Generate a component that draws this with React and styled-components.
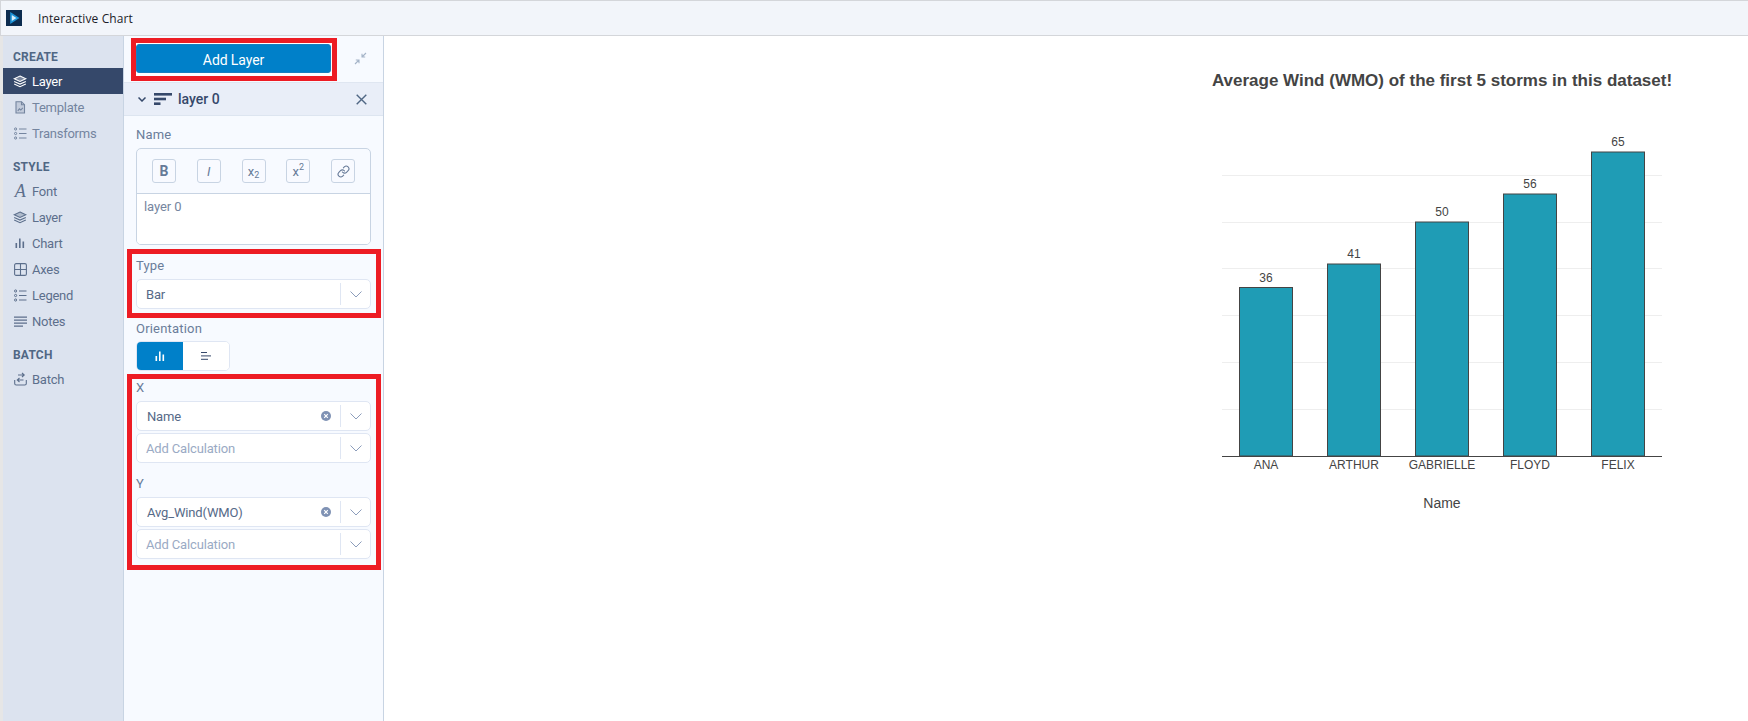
import React from "react";
import styled, { createGlobalStyle } from "styled-components";
import { Link } from "lucide-react";

const GlobalStyle = createGlobalStyle`
  html, body {
    margin: 0;
    padding: 0;
    height: 100%;
    overflow: hidden;
    background: #ffffff;
    font-family: Roboto, "Liberation Sans", sans-serif;
  }
  #root {
    height: 100%;
  }
  * {
    box-sizing: border-box;
  }
`;

const Layers = () => (
  <svg width="14" height="13" viewBox="0 0 14 13" fill="none" stroke="currentColor" strokeWidth="1.1">
    <path d="M7 1 12.8 3.7 7 6.4 1.2 3.7Z" fill="currentColor" fillOpacity="0.35" />
    <path d="M1.2 6.4 7 9.1 12.8 6.4" />
    <path d="M1.2 9 7 11.7 12.8 9" />
  </svg>
);

const TemplateIcon = () => (
  <svg width="12" height="13" viewBox="0 0 12 13" fill="none" stroke="currentColor" strokeWidth="1.1">
    <path d="M2 .7H7.5L10.5 3.7V12H2Z" fill="currentColor" fillOpacity="0.25" />
    <path d="M3.8 9.8 5.4 7.8 6.8 9 8.8 6.8" />
    <path d="M7.5 .7V3.7H10.5" />
  </svg>
);

const ListIcon = () => (
  <svg width="13" height="13" viewBox="0 0 13 13" fill="none" stroke="currentColor">
    <circle cx="1.6" cy="2" r="1.1" strokeWidth="1" />
    <circle cx="1.6" cy="6.5" r="1.1" strokeWidth="1" />
    <circle cx="1.6" cy="11" r="1.1" strokeWidth="1" />
    <path d="M5 2H12.5M5 6.5H12.5M5 11H12.5" strokeWidth="1.1" />
  </svg>
);

const BarsIcon = ({ size = 10 }) => (
  <svg width={size} height={size} viewBox="0 0 10 10" fill="currentColor">
    <rect x="0.5" y="5" width="1.6" height="5" />
    <rect x="4" y="0.5" width="1.6" height="9.5" />
    <rect x="7.5" y="3.5" width="1.6" height="6.5" />
  </svg>
);

const AxesIcon = () => (
  <svg width="13" height="13" viewBox="0 0 13 13" fill="none" stroke="currentColor" strokeWidth="1.1">
    <rect x=".6" y=".6" width="11.8" height="11.8" rx="1.5" />
    <path d="M6.5 .6V12.4M.6 6.5H12.4" />
  </svg>
);

const NotesIcon = () => (
  <svg width="13" height="11" viewBox="0 0 13 11" fill="none" stroke="currentColor" strokeWidth="1.2">
    <path d="M0 1.2H13M0 4.2H13M0 7.2H13M0 10.2H9" />
  </svg>
);

const BatchIcon = () => (
  <svg width="13" height="14" viewBox="0 0 13 14" fill="none" stroke="currentColor" strokeWidth="1.1">
    <path d="M4 3H10M8 1 10.2 3 8 5" />
    <path d="M9.5 8H3.5M5.5 6 3.3 8 5.5 10" />
    <path d="M.7 8V11.5Q.7 13 2.2 13H10.8Q12.3 13 12.3 11.5V8" />
  </svg>
);

const Chevron = ({ w = 12, h = 6, sw = 1 }) => (
  <svg width={w} height={h + 1} viewBox={`0 0 ${w} ${h + 1}`} fill="none" stroke="currentColor" strokeWidth={sw}>
    <path d={`M.5 .5 ${w / 2} ${h} ${w - 0.5} .5`} />
  </svg>
);

const App = () => {
  return (
    <>
      <GlobalStyle />
      <Page>
        <TitleBar>
          <Logo>
            <svg width="16" height="16" viewBox="0 0 16 16">
              <rect width="16" height="16" fill="#0c2c4f" />
              <path d="M5 3.5 12 8 5 12.5Z" fill="#d8ecf8" stroke="#1c93d6" strokeWidth="1.6" />
            </svg>
          </Logo>
          <WindowTitle>Interactive Chart</WindowTitle>
        </TitleBar>
        <Workspace>
          <Sidebar>
            <NavSection>
              <SectionTitle>CREATE</SectionTitle>
              <NavItem $active><NavIcon><Layers /></NavIcon>Layer</NavItem>
              <NavItem $muted><NavIcon><TemplateIcon /></NavIcon>Template</NavItem>
              <NavItem $muted><NavIcon><ListIcon /></NavIcon>Transforms</NavItem>
            </NavSection>
            <NavSection>
              <SectionTitle>STYLE</SectionTitle>
              <NavItem><NavIcon><FontGlyph>A</FontGlyph></NavIcon>Font</NavItem>
              <NavItem><NavIcon><Layers /></NavIcon>Layer</NavItem>
              <NavItem><NavIcon><BarsIcon /></NavIcon>Chart</NavItem>
              <NavItem><NavIcon><AxesIcon /></NavIcon>Axes</NavItem>
              <NavItem><NavIcon><ListIcon /></NavIcon>Legend</NavItem>
              <NavItem><NavIcon><NotesIcon /></NavIcon>Notes</NavItem>
            </NavSection>
            <NavSection>
              <SectionTitle>BATCH</SectionTitle>
              <NavItem><NavIcon><BatchIcon /></NavIcon>Batch</NavItem>
            </NavSection>
          </Sidebar>

          <Panel>
            <PanelTop>
              <AddHighlight>
                <AddButton>Add Layer</AddButton>
              </AddHighlight>
              <CollapseIcon>
                <svg width="13" height="13" viewBox="0 0 13 13" fill="none" stroke="currentColor" strokeWidth="1.1">
                  <path d="M12 1 8 5M8 1.8V5H11.2" />
                  <path d="M1 12 5 8M1.8 8H5V11.2" />
                </svg>
              </CollapseIcon>
            </PanelTop>

            <LayerHeader>
              <Chevron w={8} h={4} sw={1.5} />
              <LayerGlyph>
                <svg width="18" height="12" viewBox="0 0 18 12" fill="currentColor">
                  <rect width="18" height="2.6" />
                  <rect y="4.7" width="12" height="2.6" />
                  <rect y="9.4" width="6.5" height="2.6" />
                </svg>
              </LayerGlyph>
              <LayerName>layer 0</LayerName>
              <CloseIcon>
                <svg width="11" height="11" viewBox="0 0 11 11" fill="none" stroke="currentColor" strokeWidth="1.4">
                  <path d="M.7 .7 10.3 10.3M10.3 .7 .7 10.3" />
                </svg>
              </CloseIcon>
            </LayerHeader>

            <PanelBody>
              <Label>Name</Label>
              <Editor>
                <Toolbar>
                  <ToolButton $bold>B</ToolButton>
                  <ToolButton $italic>I</ToolButton>
                  <ToolButton>x<Sub>2</Sub></ToolButton>
                  <ToolButton>x<Sup>2</Sup></ToolButton>
                  <ToolButton><Link size={13} strokeWidth={2} /></ToolButton>
                </Toolbar>
                <EditorText>layer 0</EditorText>
              </Editor>

              <Highlight $top={3} $bottom={4} $gap={4}>
                <Label>Type</Label>
                <Select value="Bar" />
              </Highlight>

              <Label $top={2} $bottom={5}>Orientation</Label>
              <Toggle>
                <ToggleOption $on><BarsIcon /></ToggleOption>
                <ToggleOption>
                  <svg width="10" height="10" viewBox="0 0 10 10" fill="currentColor">
                    <rect x="0" y="1" width="6" height="1" />
                    <rect x="0" y="4.4" width="10" height="1" />
                    <rect x="0" y="7.8" width="7" height="1" />
                  </svg>
                </ToggleOption>
              </Toggle>

              <Highlight $top={0} $bottom={6} $gap={3}>
                <Label>X</Label>
                <Select value="Name" clearable />
                <Select placeholder="Add Calculation" stacked />
                <Label $top={12}>Y</Label>
                <Select value="Avg_Wind(WMO)" clearable />
                <Select placeholder="Add Calculation" stacked />
              </Highlight>
            </PanelBody>
          </Panel>

          <Main>
            <BarChart />
          </Main>
        </Workspace>
      </Page>
    </>
  );
};

const Select = ({ value, placeholder, clearable, stacked }) => (
  <SelectBox $stacked={stacked}>
    <SelectValue $placeholder={!value} $clearable={clearable}>{value || placeholder}</SelectValue>
    {clearable && (
      <ClearIcon>
        <svg width="10" height="10" viewBox="0 0 10 10">
          <circle cx="5" cy="5" r="5" fill="#7f92b4" />
          <path d="M3.2 3.2 6.8 6.8M6.8 3.2 3.2 6.8" stroke="#fff" strokeWidth="1.2" />
        </svg>
      </ClearIcon>
    )}
    <SelectDivider />
    <SelectArrow><Chevron /></SelectArrow>
  </SelectBox>
);

const storms = [
  { name: "ANA", value: 36 },
  { name: "ARTHUR", value: 41 },
  { name: "GABRIELLE", value: 50 },
  { name: "FLOYD", value: 56 },
  { name: "FELIX", value: 65 },
];
const gridLines = [115.5, 162.5, 208.5, 255.5, 302.5, 349.5];
const baseY = 396;

const BarChart = () => (
  <svg width="500" height="460" viewBox="0 0 500 460" fontFamily="'Liberation Sans', Arial, sans-serif" fill="#444444">
    <text x="242" y="26" textAnchor="middle" fontSize="17" fontWeight="700">
      Average Wind (WMO) of the first 5 storms in this dataset!
    </text>
    {gridLines.map((y) => (
      <line key={y} x1="22" x2="462" y1={y} y2={y} stroke="#eeeeee" strokeWidth="1" />
    ))}
    {storms.map((s, i) => {
      const center = 66 + i * 88;
      const top = Math.round((baseY - s.value * 4.68) * 2) / 2;
      return (
        <g key={s.name}>
          <rect
            x={center - 26.5}
            y={top}
            width="53"
            height={baseY - top}
            fill="#1f9cb5"
            stroke="#444444"
            strokeWidth="1"
          />
          <text x={center} y={top - 6} textAnchor="middle" fontSize="12">{s.value}</text>
          <text x={center} y="409" textAnchor="middle" fontSize="12">{s.name}</text>
        </g>
      );
    })}
    <line x1="22" x2="462" y1="396.5" y2="396.5" stroke="#444444" strokeWidth="1" />
    <text x="242" y="448" textAnchor="middle" fontSize="14">Name</text>
  </svg>
);

const Page = styled.div`
  display: flex;
  flex-direction: column;
  height: 100vh;
`;

const TitleBar = styled.header`
  display: flex;
  align-items: center;
  height: 36px;
  flex-shrink: 0;
  padding-left: 5px;
  background: #f2f5fa;
  border: 1px solid #d4d6da;
  border-right: none;
`;

const Logo = styled.div`
  display: flex;
  width: 16px;
  height: 16px;
`;

const WindowTitle = styled.span`
  margin-left: 16px;
  font-family: "Open Sans", sans-serif;
  font-size: 12px;
  letter-spacing: 0.12px;
  color: #1c1c28;
`;

const Workspace = styled.div`
  display: flex;
  flex: 1;
  min-height: 0;
`;

const Sidebar = styled.nav`
  width: 124px;
  flex-shrink: 0;
  padding-top: 8px;
  background: #dce3ef;
  border-left: 3px solid #e6e6e6;
  border-right: 1px solid #c8d4e3;
`;

const NavSection = styled.div`
  margin-bottom: 8px;
`;

const SectionTitle = styled.div`
  height: 24px;
  line-height: 26px;
  padding-left: 10px;
  font-size: 12px;
  font-weight: 700;
  letter-spacing: 0.2px;
  color: #506784;
`;

const NavItem = styled.div`
  display: flex;
  align-items: center;
  height: 26px;
  padding-left: 10px;
  font-size: 13px;
  letter-spacing: -0.25px;
  color: ${(props) => (props.$active ? "#ffffff" : props.$muted ? "#74859f" : "#5c6f8c")};
  background: ${(props) => (props.$active ? "#35486a" : "transparent")};
`;

const NavIcon = styled.span`
  display: flex;
  align-items: center;
  justify-content: center;
  width: 14px;
  margin-right: 5px;
`;

const FontGlyph = styled.span`
  font-family: "Liberation Serif", serif;
  font-style: italic;
  font-size: 18px;
  line-height: 18px;
`;

const Panel = styled.aside`
  width: 260px;
  flex-shrink: 0;
  background: #f7faff;
  border-right: 1px solid #c8d4e3;
`;

const PanelTop = styled.div`
  display: flex;
  align-items: flex-start;
  height: 47px;
  padding: 2px 0 0 7px;
  border-bottom: 1px solid #dfe6f1;
`;

const AddHighlight = styled.div`
  width: 206px;
  height: 43px;
  padding: 1px 1px 3px 0;
  background: #ffffff;
  border: 5px solid #ed1c24;
`;

const AddButton = styled.button`
  width: 100%;
  height: 100%;
  padding: 2px 0 0;
  border: 1px solid #1a7fbf;
  border-radius: 3px;
  background: #0080c9;
  color: #ffffff;
  font-family: inherit;
  font-size: 14px;
  letter-spacing: -0.1px;
`;

const CollapseIcon = styled.span`
  display: flex;
  margin: 14px 0 0 17px;
  color: #a5b4c8;
`;

const LayerHeader = styled.div`
  display: flex;
  align-items: center;
  height: 33px;
  padding-left: 14px;
  color: #35486a;
  background: #e9eef8;
  border-bottom: 1px solid #dde5f0;
`;

const LayerGlyph = styled.span`
  display: flex;
  margin-left: 8px;
`;

const LayerName = styled.span`
  flex: 1;
  margin-left: 6px;
  font-size: 14px;
  font-weight: 500;
`;

const CloseIcon = styled.span`
  display: flex;
  margin-right: 16px;
  color: #506784;
`;

const PanelBody = styled.div`
  padding: 10px 12px 0;
`;

const Label = styled.div`
  height: 16px;
  line-height: 18px;
  margin-top: ${(props) => props.$top || 0}px;
  margin-bottom: ${(props) => (props.$bottom === undefined ? 6 : props.$bottom)}px;
  font-size: 13px;
  letter-spacing: 0.2px;
  color: #6a7d9a;
`;

const Editor = styled.div`
  height: 97px;
  overflow: hidden;
  border: 1px solid #c8d4e3;
  border-radius: 5px;
`;

const Toolbar = styled.div`
  display: flex;
  align-items: center;
  gap: 20.75px;
  height: 45px;
  padding-left: 15px;
  border-bottom: 1px solid #c8d4e3;
`;

const ToolButton = styled.span`
  display: flex;
  align-items: center;
  justify-content: center;
  width: 24px;
  height: 24px;
  font-family: Roboto, sans-serif;
  font-size: ${(props) => (props.$bold ? "14px" : "13px")};
  font-weight: ${(props) => (props.$bold ? 700 : 400)};
  font-style: ${(props) => (props.$italic ? "italic" : "normal")};
  color: #667a98;
  background: #f8faff;
  border: 1px solid #c8d4e3;
  border-radius: 3px;
`;

const Sub = styled.span`
  font-size: 9px;
  position: relative;
  top: 4px;
`;

const Sup = styled.span`
  font-size: 9px;
  position: relative;
  top: -4px;
`;

const EditorText = styled.div`
  height: 50px;
  padding: 5px 7px;
  font-size: 13px;
  line-height: 16px;
  letter-spacing: -0.1px;
  color: #7686a0;
  background: #ffffff;
`;

const Highlight = styled.div`
  margin: ${(props) => props.$gap}px -10px 0 -9px;
  padding: ${(props) => props.$top}px 5px ${(props) => props.$bottom}px 4px;
  border: 5px solid #ed1c24;
`;

const SelectBox = styled.div`
  display: flex;
  align-items: center;
  height: 30px;
  margin-top: ${(props) => (props.$stacked ? "2px" : "0")};
  background: #ffffff;
  border: 1px solid #dfe6f3;
  border-radius: 5px;
`;

const SelectValue = styled.span`
  flex: 1;
  padding-left: ${(props) => (props.$clearable ? 10 : 9)}px;
  font-size: 13px;
  letter-spacing: -0.15px;
  color: ${(props) => (props.$placeholder ? "#9aaac4" : "#566a88")};
`;

const ClearIcon = styled.span`
  display: flex;
  margin-right: 9px;
`;

const SelectDivider = styled.span`
  width: 1px;
  height: 22px;
  background: #dfe6f3;
`;

const SelectArrow = styled.span`
  display: flex;
  justify-content: center;
  width: 29px;
  color: #8c9dbb;
`;

const Toggle = styled.div`
  display: flex;
  width: 94px;
  height: 30px;
  overflow: hidden;
  background: #ffffff;
  border: 1px solid #dfe6f3;
  border-radius: 5px;
`;

const ToggleOption = styled.span`
  display: flex;
  align-items: center;
  justify-content: center;
  flex: 1;
  color: ${(props) => (props.$on ? "#ffffff" : "#35486a")};
  background: ${(props) => (props.$on ? "#0080c9" : "#ffffff")};
`;

const Main = styled.main`
  display: flex;
  justify-content: flex-end;
  align-items: flex-start;
  flex: 1;
  padding: 24px 48px 0 0;
  background: #ffffff;
`;

export default App;
